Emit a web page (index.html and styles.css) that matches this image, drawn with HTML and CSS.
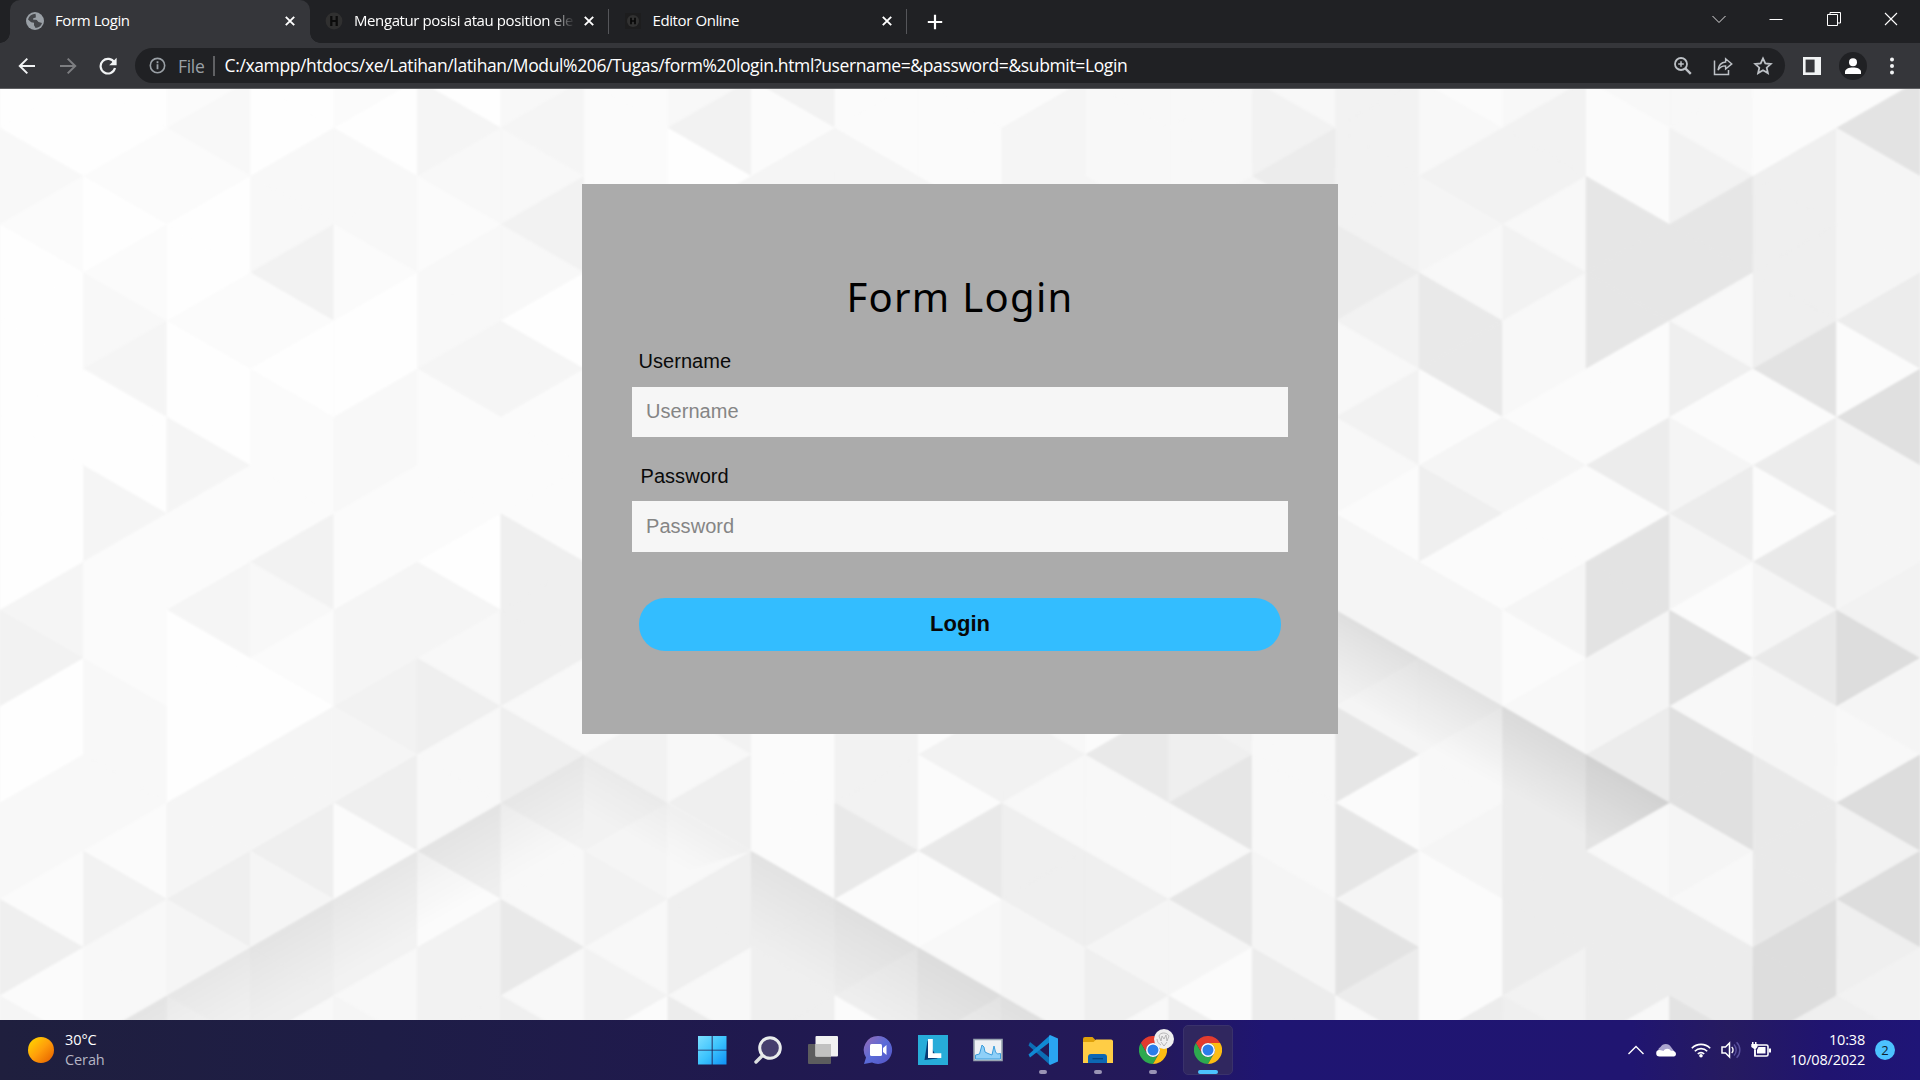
FILE: index.html
```html
<!DOCTYPE html>
<html lang="id">
<head>
<meta charset="utf-8">
<title>Form Login</title>
<link rel="stylesheet" href="styles.css">
</head>
<body>
<svg class="defs" width="0" height="0" aria-hidden="true">
  <symbol id="chrome" viewBox="0 0 48 48">
    <path fill="#e33b2e" d="M3.2 12A24 24 0 0 1 44.8 12H24A12 12 0 0 0 13.6 30z"/>
    <path fill="#2da94f" d="M3.2 12A24 24 0 0 0 24 48L34.4 30A12 12 0 0 1 13.6 30z"/>
    <path fill="#fdbd12" d="M44.8 12A24 24 0 0 1 24 48L34.4 30A12 12 0 0 0 24 12z"/>
    <circle cx="24" cy="24" r="12" fill="#fff"/><circle cx="24" cy="24" r="9.4" fill="#2b7de9"/>
  </symbol>
  <symbol id="close" viewBox="0 0 10 10"><path d="M.8.8l8.4 8.4M9.2.8L.8 9.2" stroke="#fff" stroke-width="1.9"/></symbol>
</svg>

<header class="tabstrip">
  <div class="tab active">
    <svg class="favicon" viewBox="0 0 18 18"><circle cx="9" cy="9" r="9" fill="#9aa0a6"/><path d="M9.5 1.8C6 2 3 4 2 7.5l3.2 2.8 2.8.4v2.6l1.6 2.7c3.4-.2 5.6-2.2 6.4-5l-3.4-1-2-2.2H7.2V6.2l2.6-.6V3.8z" fill="#35363a" opacity=".85"/><path d="M8.4 6.8l2.6-.9 2.4-2.3 2.7 3.8-.5 2.6-2.8-.3-1.8-2z" fill="#9aa0a6"/></svg>
    <span class="tab-title">Form Login</span>
    <svg class="close"><use href="#close"/></svg>
  </div>
  <div class="tab">
    <svg class="favicon" viewBox="0 0 18 18"><circle cx="9" cy="9" r="8.4" fill="#303030"/><path d="M6.3 4v10M11.7 4v10M6.3 9h5.4" stroke="#0c0c0c" stroke-width="2.2"/></svg>
    <span class="tab-title fade">Mengatur posisi atau position ele</span>
    <svg class="close"><use href="#close"/></svg>
  </div>
  <div class="tab">
    <svg class="favicon" viewBox="0 0 18 18"><path fill="#1d1d1e" d="M1 1h16v16H1z"/><circle cx="9" cy="9" r="6" fill="#323232"/><path d="M7 5.8v6.4M11 5.8v6.4M7 9h4" stroke="#080808" stroke-width="1.7"/></svg>
    <span class="tab-title">Editor Online</span>
    <svg class="close"><use href="#close"/></svg>
  </div>
  <svg class="newtab" viewBox="0 0 16 16"><path d="M8 .8v14.4M.8 8h14.4" stroke="#fff" stroke-width="2.2"/></svg>
  <div class="winbtns">
    <svg viewBox="0 0 14 14"><path d="M.5 4l6.5 6.5L13.5 4" fill="none" stroke="#ddd"/></svg>
    <svg viewBox="0 0 14 14"><path d="M.5 7.5h13" stroke="#fff"/></svg>
    <svg viewBox="0 0 14 14"><path d="M.5 2.5h10v11h-10zM3 2.5v-2h10.5v10.500H11" fill="none" stroke="#fff"/></svg>
    <svg viewBox="0 0 14 14"><path d="M1 1l12 12M13 1L1 13" stroke="#fff" stroke-width="1.1"/></svg>
  </div>
</header>

<nav class="toolbar">
  <svg class="nav" viewBox="0 0 18 18"><path d="M17 9H2M9.300 1.600L1.800 9l7.500 7.400" fill="none" stroke="#f1f3f4" stroke-width="2"/></svg>
  <svg class="nav" viewBox="0 0 18 18"><path d="M1 9h15M8.700 1.600L16.200 9l-7.500 7.400" fill="none" stroke="#7d7e81" stroke-width="2"/></svg>
  <svg class="nav" viewBox="0 0 18 18"><path d="M15.300 5.600A7.300 7.300 0 1 0 16 11" fill="none" stroke="#f1f3f4" stroke-width="2.200"/><path d="M17.600.8v7.400h-7.400z" fill="#f1f3f4"/></svg>
  <div class="omnibox">
    <svg class="info" viewBox="0 0 18 18"><circle cx="9" cy="9" r="7.600" fill="none" stroke="#9aa0a6" stroke-width="1.700"/><path d="M9 7.800V13M9 4.600v2" stroke="#9aa0a6" stroke-width="1.900"/></svg>
    <span class="scheme">File</span>
    <span class="url">C:/xampp/htdocs/xe/Latihan/latihan/Modul%206/Tugas/form%20login.html?username=&amp;password=&amp;submit=Login</span>
    <svg class="act" viewBox="0 0 20 20"><circle cx="8" cy="8" r="6" fill="none" stroke="#bdc1c6" stroke-width="1.800"/><path d="M12.300 12.300l5.500 5.500" stroke="#bdc1c6" stroke-width="2.400"/><path d="M8 5.200v5.600M5.200 8h5.600" stroke="#bdc1c6" stroke-width="1.500"/></svg>
    <svg class="act" viewBox="0 0 20 20"><path d="M1.500 4.500v14h14V14" fill="none" stroke="#bdc1c6" stroke-width="1.500"/><path d="M5 14c.6-5 3.400-7.600 7.600-8V2.700l6.200 5.200-6.200 5.200V9.900C9.300 9.800 7 11 5 14z" fill="none" stroke="#bdc1c6" stroke-width="1.400"/></svg>
    <svg class="act" viewBox="0 0 20 20"><path d="M10 2.400l2.300 5 5.500.6-4.100 3.700 1.200 5.400-4.900-2.800-4.900 2.800 1.200-5.400L2.200 8l5.500-.6z" fill="none" stroke="#bdc1c6" stroke-width="1.800"/></svg>
  </div>
  <svg class="panel" viewBox="0 0 18 18"><path d="M0 0h18v18H0z" fill="#f1f3f4"/><path d="M2.600 2.600h9v12.800h-9z" fill="#35363a"/></svg>
  <svg class="avatar" viewBox="0 0 28 28"><circle cx="14" cy="14" r="14" fill="#202124"/><circle cx="14" cy="10.200" r="4" fill="#fff"/><path d="M6 22v-2c0-3 4-4.400 8-4.400s8 1.400 8 4.400v2z" fill="#fff"/></svg>
  <svg class="dots" viewBox="0 0 4 18"><circle cx="2" cy="2.500" r="2" fill="#f1f3f4"/><circle cx="2" cy="9" r="2" fill="#f1f3f4"/><circle cx="2" cy="15.500" r="2" fill="#f1f3f4"/></svg>
</nav>

<main class="page">
  <svg class="backdrop" viewBox="0 88 1920 932" aria-hidden="true">
    <defs>
      <linearGradient id="foldL" gradientUnits="userSpaceOnUse" x1="333" y1="898" x2="369" y2="961"><stop offset="0" stop-opacity=".05"/><stop offset="1" stop-opacity="0"/></linearGradient>
      <linearGradient id="foldC" gradientUnits="userSpaceOnUse" x1="918" y1="946" x2="876" y2="1019"><stop offset="0" stop-opacity=".055"/><stop offset="1" stop-opacity="0"/></linearGradient>
      <linearGradient id="foldR" gradientUnits="userSpaceOnUse" x1="1503" y1="705" x2="1467" y2="768"><stop offset="0" stop-opacity=".08"/><stop offset="1" stop-opacity="0"/></linearGradient>
      <linearGradient id="foldB" gradientUnits="userSpaceOnUse" x1="668" y1="802" x2="643" y2="845"><stop offset="0" stop-opacity=".035"/><stop offset="1" stop-opacity="0"/></linearGradient>
      <filter id="soft" x="0" y="0" width="1" height="1"><feGaussianBlur stdDeviation="1.2"/></filter>
    </defs>
    <rect y="88" width="1920" height="932" fill="#f8f8f8"/>
    <g filter="url(#soft)">
      <g id="facets"></g>
      <path fill="url(#foldL)" d="M83 1043L584 754V900L250 1043z"/>
      <path fill="url(#foldB)" d="M584 754L751 850L584 900z"/>
      <path fill="url(#foldC)" d="M751 850L1085 1043H751z"/>
      <path fill="url(#foldR)" d="M1336 609L1670 802L1586 850L1336 700z"/>
    </g>
  </svg>
  <form class="card">
    <h1>Form Login</h1>
    <label class="user" for="u">Username</label>
    <input id="u" class="field" type="text" placeholder="Username">
    <label class="pass" for="p">Password</label>
    <input id="p" class="field second" type="password" placeholder="Password">
    <button type="button">Login</button>
  </form>
</main>

<footer class="taskbar">
  <div class="weather">
    <span class="sun"></span>
    <div><p>30°C</p><p class="dim">Cerah</p></div>
  </div>
  <div class="apps">
    <div class="app"><svg width="30" height="30" viewBox="0 0 30 30"><defs><linearGradient id="win" x1="0" y1="0" x2="30" y2="30" gradientUnits="userSpaceOnUse"><stop stop-color="#7fe0ff"/><stop offset=".5" stop-color="#3cc3fd"/><stop offset="1" stop-color="#0c8df5"/></linearGradient></defs><path fill="url(#win)" d="M0 1h13.700v13.700H0zM14.600 1h13.900v13.700H14.600zM0 15.600h13.700v13.900H0zM14.600 15.600h13.900v13.900H14.600z"/></svg></div>
    <div class="app"><svg width="30" height="30" viewBox="0 0 30 30"><path d="M9.500 20.500L3 27" stroke="#dcdfe0" stroke-width="3.400" stroke-linecap="round"/><circle cx="17" cy="13" r="10.300" fill="#463f6e" stroke="#e9ecec" stroke-width="3"/></svg></div>
    <div class="app"><svg width="30" height="30" viewBox="0 0 30 30"><rect y="9" width="23" height="20" rx="1" fill="#5c5c5e"/><rect x="7.500" y="1" width="22.500" height="20.500" rx="1" fill="#f1f1f1"/><path d="M7.500 9H23v12.500H7.500z" fill="#c1c1c1"/></svg></div>
    <div class="app"><svg width="30" height="30" viewBox="0 0 30 30"><defs><linearGradient id="chat" x1="0" y1="0" x2="1" y2="1"><stop stop-color="#9a6bb4"/><stop offset=".5" stop-color="#5a6bd8"/><stop offset="1" stop-color="#5553c4"/></linearGradient></defs><path fill="url(#chat)" d="M15 1a14 14 0 1 1-6 26.600L1 29l2-6.500A14 14 0 0 1 15 1z"/><rect x="7" y="9" width="12" height="12" rx="1.500" fill="#fff"/><path d="M20 13l3.500-3v10L20 17z" fill="#fff"/></svg></div>
    <div class="app"><svg width="30" height="30" viewBox="0 0 30 30"><path fill="#27acd9" d="M0 0h30v30H0z"/><path fill="#063a75" d="M9.500 5.500L6.500 25l13-1.500z"/><path fill="#fff" d="M10 4h4.800v14.300h8.500V23H10z"/></svg></div>
    <div class="app"><svg width="30" height="30" viewBox="0 0 30 30"><path fill="#eef1f4" stroke="#98a4b0" stroke-width="1.600" d="M1 4.500h28v21H1z"/><path fill="#8fd0f8" stroke="#3b9ddb" d="M2.500 20l4-1 2.500-9 2 2 1 5 3 1.500L19 20l2-9 1.500 6 2 2 3-.5v5.500h-25z"/></svg></div>
    <div class="app run"><svg width="30" height="30" viewBox="0 0 30 30"><path fill="#0c6eb5" d="M2 7l20 16v7L.5 10.500z"/><path fill="#1089d3" d="M2 22.500L22 7V.3L.5 19.500z"/><path fill="#2aa5f2" d="M22 0l8 3.500v23L22 30l-1-1V1z"/></svg></div>
    <div class="app run"><svg width="30" height="30" viewBox="0 0 30 30"><path fill="#dea10b" d="M0 4a2 2 0 0 1 2-2h7.500L13 5.500V10H0z"/><path fill="#ffcd45" d="M0 7h10.500L13 4.500h15A2 2 0 0 1 30 6v22H0z"/><path fill="#0d67b4" d="M5 28v-6a3 3 0 0 1 3-3h13a3 3 0 0 1 3 3v6z"/><path d="M9.500 23.700h10.500" stroke="#06457f" stroke-width="1.300"/></svg></div>
    <div class="app run"><svg width="28" height="28"><use href="#chrome"/></svg>
      <svg class="profile" viewBox="0 0 20 20"><circle cx="10" cy="10" r="10" fill="#efefef"/><path d="M5 7c1-4 8-4 10 0M5 7l2 5 1-5 2 3 2-4 1 6 2-5M7 13l3 4 3-4M3 10c0 3 2 5 4 6" fill="none" stroke="#a8a8a8" stroke-width=".8"/></svg></div>
    <div class="app run current"><svg width="28" height="28"><use href="#chrome"/></svg></div>
  </div>
  <div class="tray">
    <svg width="18" height="12" viewBox="0 0 18 12"><path d="M1.500 10L9 2.500l7.500 7.500" fill="none" stroke="#fff" stroke-width="1.400"/></svg>
    <svg class="cloud" width="20" height="14" viewBox="0 0 20 14"><path fill="#aba5cf" d="M4 11a4 4 0 0 1 .5-7A6 6 0 0 1 15 4l3 4z"/><path fill="#fff" d="M3.500 13.500a3.300 3.300 0 0 1 0-6.600c2 0 3 1 4 1 1.500-3 6-3 7.500 0 3-.5 5 1 5 3s-1.500 2.600-3 2.600z"/></svg>
    <svg class="wifi" width="20" height="16" viewBox="0 0 20 16"><g fill="none" stroke="#fff" stroke-width="1.600"><path d="M.8 6.200a13 13 0 0 1 18.400 0M3.800 9.200a8.800 8.800 0 0 1 12.400 0M6.800 12a4.500 4.500 0 0 1 6.400 0"/></g><circle cx="10" cy="13.800" r="1.800" fill="#fff"/></svg>
    <svg class="vol" width="20" height="18" viewBox="0 0 20 18"><path d="M1 6h3.500L8.500 2v14l-4-4H1z" fill="none" stroke="#fff" stroke-width="1.500"/><path d="M10.700 6a4 4 0 0 1 0 6" fill="none" stroke="#fff" stroke-width="1.400"/><path d="M13 3.500a8 8 0 0 1 0 11M15.600 1.200a11 11 0 0 1 0 15.600" fill="none" stroke="#5b52a0" stroke-width="1.400"/></svg>
    <svg class="bat" width="20" height="18" viewBox="0 0 20 18"><path d="M6 4h9.500a1.500 1.500 0 0 1 1.500 1.500v8a1.500 1.500 0 0 1-1.500 1.500H4V9" fill="none" stroke="#fff" stroke-width="1.600"/><path fill="#fff" d="M7.500 6h7v6.500H6V9zM18 7.500h2v4h-2zM1 1h1.500v2H4V1h1.500v2H6.500v3L4.700 8v7H3.200V8L.3 6V3H1z"/></svg>
    <div class="clock"><p>10:38</p><p>10/08/2022</p></div>
    <span class="count">2</span>
  </div>
</footer>
<script src="facets.js"></script>
</body>
</html>
```
FILE: styles.css
```css
* { box-sizing: border-box; }
body {
  margin: 0;
  width: 1920px;
  height: 1080px;
  overflow: hidden;
  display: flex;
  flex-direction: column;
  font-family: "Open Sans", "Noto Sans", sans-serif;
}
p { margin: 0; }
svg { display: block; flex: none; }
.defs { position: absolute; }

.tabstrip {
  height: 43px;
  flex: none;
  background: #202124;
  display: flex;
  align-items: center;
  padding-left: 10px;
  color: #fff;
}
.tab {
  width: 298.5px;
  height: 43px;
  display: flex;
  align-items: center;
  padding: 0 15px 1px 15px;
  position: relative;
}
.tab.active {
  width: 300px;
  padding-left: 16px;
  background: #35363a;
  border-radius: 10px 10px 0 0;
}
.tab.active::before, .tab.active::after {
  content: "";
  position: absolute;
  bottom: 0;
  width: 10px;
  height: 10px;
}
.tab.active::before { left: -10px; background: radial-gradient(circle at 0 0, transparent 9.5px, #35363a 10px); }
.tab.active::after { right: -10px; background: radial-gradient(circle at 100% 0, transparent 9.5px, #35363a 10px); }
.tab:not(.active)::after {
  content: "";
  position: absolute;
  right: 0;
  top: 9px;
  width: 1px;
  height: 25px;
  background: #55565a;
}
.favicon { width: 18px; height: 18px; }
.tab-title {
  flex: 1;
  margin: 0 9px 0 11px;
  padding-bottom: 2px;
  font-size: 15px;
  letter-spacing: -.4px;
  line-height: 20px;
  white-space: nowrap;
}
.fade { -webkit-mask-image: linear-gradient(90deg, #000 88%, transparent); mask-image: linear-gradient(90deg, #000 88%, transparent); }
.close { width: 10px; height: 10px; }
.newtab { width: 16px; height: 16px; margin-left: 20px; }
.winbtns { margin-left: auto; display: flex; gap: 43.3px; padding: 0 22px 6px 0; }
.winbtns svg { width: 14px; height: 14px; }

.toolbar {
  height: 46px;
  flex: none;
  background: #35363a;
  border-bottom: 1px solid #5f6063;
  display: flex;
  align-items: center;
  padding: 0 26px 0 18px;
}
.nav { width: 18px; height: 18px; margin-right: 23px; }
.nav:nth-child(2) { margin-right: 22px; }
.nav:nth-child(3) { margin-right: 18px; }
.omnibox {
  flex: 1;
  height: 35px;
  border-radius: 18px;
  background: #202124;
  display: flex;
  align-items: center;
  padding: 0 12px 0 14px;
  font-size: 17.500px;
  color: #fff;
}
.info { width: 17px; height: 17px; }
.scheme {
  color: #9aa0a6;
  margin-left: 12px;
  padding-right: 8px;
  border-right: 2px solid #606164;
  line-height: 20px;
  letter-spacing: -.3px;
}
.url { margin: 0 auto 0 10px; padding-bottom: 1px; letter-spacing: -.37px; white-space: nowrap; }
.act { width: 20px; height: 20px; margin-left: 20px; }
.panel { width: 18px; height: 18px; margin-left: 18px; }
.avatar { width: 28px; height: 28px; margin-left: 18px; }
.dots { width: 4px; height: 18px; margin-left: 23px; }

.page {
  height: 931px;
  flex: none;
  position: relative;
  display: flex;
  justify-content: center;
  align-items: flex-start;
}
.backdrop { position: absolute; left: 0; top: 0; width: 1920px; height: 932px; }
.card {
  position: relative;
  width: 756px;
  height: 550px;
  margin-top: 95px;
  padding: 83px 50px 0;
  background: #ababab;
  display: flex;
  flex-direction: column;
  font-family: "Liberation Sans", Arial, sans-serif;
}
h1 {
  margin: 0;
  font: 400 40px/60px "Noto Sans", sans-serif;
  letter-spacing: 1.3px;
  text-align: center;
}
label { font-size: 20px; line-height: 24px; color: #0a0a0a; letter-spacing: .05px; }
.user { margin: 22px 0 14px 6.5px; }
.pass { margin: 27px 0 13px 8.5px; }
.field {
  width: 656px;
  height: 50px;
  border: 0;
  border-radius: 0;
  background: #f6f6f6;
  padding: 0 14px 1px;
  font: 20px "Liberation Sans", Arial, sans-serif;
  letter-spacing: .05px;
}
.field.second { height: 51px; }
.field::placeholder { color: #858585; opacity: 1; }
button {
  width: 642px;
  height: 53px;
  margin: 46px 7px 0;
  padding: 0 0 2px;
  border: 0;
  border-radius: 26px;
  background: #33bdff;
  color: #080808;
  font: 700 22px "Liberation Sans", Arial, sans-serif;
}

.taskbar {
  height: 60px;
  flex: none;
  position: relative;
  background: linear-gradient(90deg, #1f1f3e, #1e1d46 20%, #20194f 40%, #24195a 60%, #1f1572 66%, #201571 85%, #261b60 90%, #201470 95%, #1f1577);
  display: grid;
  grid-template-columns: 688px auto 1fr;
  align-items: center;
  color: #fff;
  font-size: 14.500px;
  line-height: 20px;
}
.weather { display: flex; align-items: center; gap: 11px; padding-left: 28px; letter-spacing: -.1px; }
.sun { width: 26px; height: 26px; border-radius: 50%; background: linear-gradient(135deg, #ffd000 10%, #ff9e0a 50%, #e86500 92%); }
.dim { color: #b5b5c4; }
.apps { display: flex; gap: 5px; }
.app {
  width: 50px;
  height: 50px;
  display: flex;
  align-items: center;
  justify-content: center;
  position: relative;
  border-radius: 5px;
}
.run::after {
  content: "";
  position: absolute;
  left: 21px;
  bottom: 1px;
  width: 8px;
  height: 4px;
  border-radius: 2px;
  background: #9a94b5;
}
.current { background: #30275f; border: 1px solid #3a326b; }
.current::after { left: 14px; bottom: 0; width: 20px; background: #4cc2ff; }
.profile { position: absolute; left: 26px; top: 4px; width: 20px; height: 20px; }
.tray { display: flex; align-items: center; justify-content: flex-end; padding-right: 25px; }
.cloud { margin-left: 11px; }
.wifi { margin-left: 15px; }
.vol { margin-left: 10px; }
.bat { margin-left: 10px; }
.clock { margin-left: 18px; width: 76px; display: flex; flex-direction: column; align-items: flex-end; letter-spacing: -.2px; white-space: nowrap; }
.count {
  width: 20px;
  height: 20px;
  margin-left: 10px;
  border-radius: 50%;
  background: #4cc2ff;
  color: #10222e;
  font-size: 13px;
  text-align: center;
}
```
FILE: facets.js
```javascript
// One string per column of the triangle mesh, one hex digit per facet from
// top to bottom. A digit is the darkness of the facet in steps of three.
const columns = [
  "002100000003400221513", "001012300311122214225", "121001003113000335343",
  "002241011142103353552", "102210022113343514423", "032122311103252251444",
  "232420311155525422725", "111133333333324434241", "240333333333342525526",
  "413333333333311115555", "113333333333344471651", "111333333333314171275",
  "133333333333324255336", "222333333333317225352", "222333333333345828315",
  "246333333333322223366", "444464242133438183962", "124327713513332231116",
  "244242213113126666645", "211888116199336926662", "224882513631a2aa32669",
  "115555916173733777bb5", "1933361a3334b32b4b545"
];
const stepX = 1920 / 23;
const y = j => 78.9 + 48.2 * j;
const polygons = [];
columns.forEach((column, k) => {
  [...column].forEach((digit, j) => {
    const left = k * stepX;
    const right = left + stepX;
    const apexLeft = (k + j) % 2 === 1;
    const apex = apexLeft ? left : right;
    const base = apexLeft ? right : left;
    const g = 254 - 3 * parseInt(digit, 16);
    const fill = `rgb(${g},${g},${g})`;
    polygons.push(`<polygon points="${apex},${y(j)} ${base},${y(j - 1)} ${base},${y(j + 1)}" fill="${fill}" stroke="${fill}" stroke-width=".6"/>`);
  });
});
document.getElementById("facets").innerHTML = polygons.join("");
```
